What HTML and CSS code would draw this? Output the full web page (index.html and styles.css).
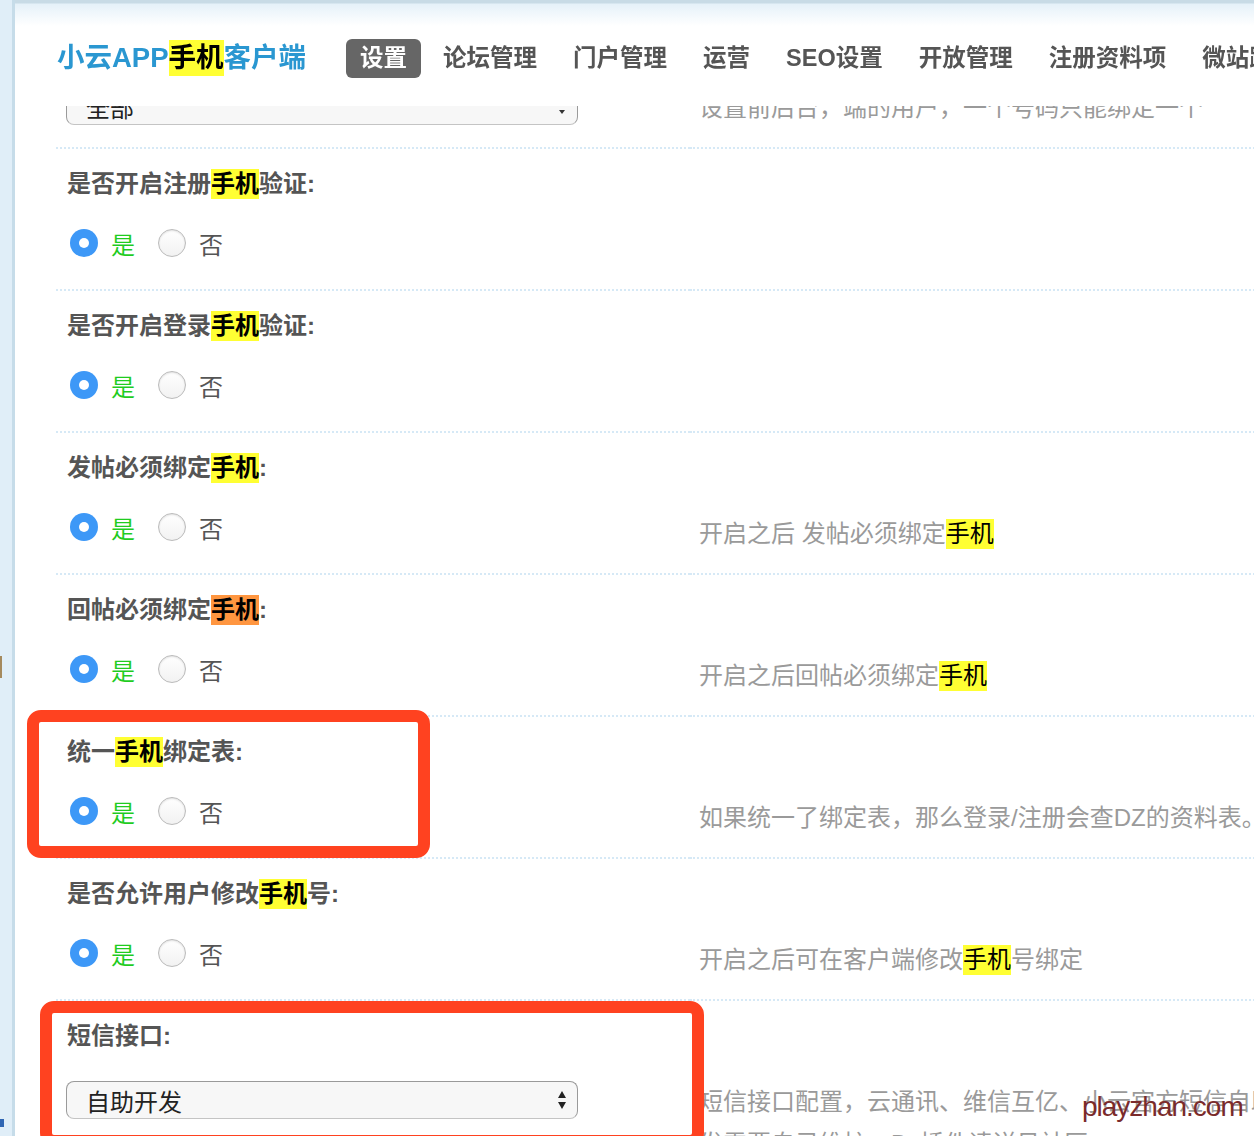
FILE: index.html
```html
<!DOCTYPE html>
<html lang="zh-CN">
<head>
    <meta charset="UTF-8">
    <title>小云APP手机客户端 - 设置</title>
    <link rel="stylesheet" href="styles.css">
</head>
<body>
<div class="side">
    <i class="side_mark1"></i>
    <i class="side_mark2"></i>
</div>

<div class="topbar">
    <h1 class="logo">小云APP<span class="hl">手机</span>客户端</h1>
    <ul class="nav">
        <li class="on">设置</li>
        <li>论坛管理</li>
        <li>门户管理</li>
        <li>运营</li>
        <li>SEO设置</li>
        <li>开放管理</li>
        <li>注册资料项</li>
        <li>微站跳转</li>
    </ul>
</div>

<div class="main">
    <!-- 上一项，被顶部导航遮住一半 -->
    <div class="row">
        <div class="cell_l">
            <div class="label">注册手机号码范围:</div>
            <div class="sel">
                <span>全部</span>
                <svg width="10" height="22" viewBox="0 0 10 22"><path d="M2 15 L8 15 L5 19 Z" fill="#333"/></svg>
            </div>
        </div>
        <div class="cell_r">设置前后台，端的用户，一个号码只能绑定一个</div>
    </div>

    <div class="row">
        <div class="cell_l">
            <div class="label">是否开启注册<span class="hl">手机</span>验证:</div>
            <div class="radios">
                <span class="rd on"></span><span class="yes">是</span>
                <span class="rd"></span><span class="no">否</span>
            </div>
        </div>
        <div class="cell_r"></div>
    </div>

    <div class="row">
        <div class="cell_l">
            <div class="label">是否开启登录<span class="hl">手机</span>验证:</div>
            <div class="radios">
                <span class="rd on"></span><span class="yes">是</span>
                <span class="rd"></span><span class="no">否</span>
            </div>
        </div>
        <div class="cell_r"></div>
    </div>

    <div class="row">
        <div class="cell_l">
            <div class="label">发帖必须绑定<span class="hl">手机</span>:</div>
            <div class="radios">
                <span class="rd on"></span><span class="yes">是</span>
                <span class="rd"></span><span class="no">否</span>
            </div>
        </div>
        <div class="cell_r">开启之后 发帖必须绑定<span class="hl">手机</span></div>
    </div>

    <div class="row">
        <div class="cell_l">
            <div class="label">回帖必须绑定<span class="hl cur">手机</span>:</div>
            <div class="radios">
                <span class="rd on"></span><span class="yes">是</span>
                <span class="rd"></span><span class="no">否</span>
            </div>
        </div>
        <div class="cell_r">开启之后回帖必须绑定<span class="hl">手机</span></div>
    </div>

    <div class="row">
        <div class="cell_l">
            <div class="label">统一<span class="hl">手机</span>绑定表:</div>
            <div class="radios">
                <span class="rd on"></span><span class="yes">是</span>
                <span class="rd"></span><span class="no">否</span>
            </div>
        </div>
        <div class="cell_r">如果统一了绑定表，那么登录/注册会查DZ的资料表。</div>
    </div>

    <div class="row">
        <div class="cell_l">
            <div class="label">是否允许用户修改<span class="hl">手机</span>号:</div>
            <div class="radios">
                <span class="rd on"></span><span class="yes">是</span>
                <span class="rd"></span><span class="no">否</span>
            </div>
        </div>
        <div class="cell_r">开启之后可在客户端修改<span class="hl">手机</span>号绑定</div>
    </div>

    <div class="row">
        <div class="cell_l">
            <div class="label">短信接口:</div>
            <div class="sel">
                <span>自助开发</span>
                <svg width="10" height="22" viewBox="0 0 10 22"><path d="M1 9 L9 9 L5 2 Z M1 13 L9 13 L5 20 Z" fill="#222"/></svg>
            </div>
        </div>
        <div class="cell_r">短信接口配置，云通讯、维信互亿、小云官方短信自助开发<br>发需要自己维护，Dz插件请详见社区</div>
    </div>
</div>

<!-- 截图上的红框标注 -->
<div class="mark_box box1"></div>
<div class="mark_box box2"></div>
<div class="watermark">playzhan.com</div>
</body>
</html>
```

FILE: styles.css
```css
body {
    margin: 0;
    width: 1254px;
    height: 1136px;
    overflow: hidden;
    background: #ffffff;
    font-family: "Liberation Sans", "Noto Sans CJK SC", sans-serif;
    display: flex;
}

.side {
    width: 12px;
    flex-shrink: 0;
    background: #e0eef8;
    border-right: 3px solid #c6dce9;
    position: relative;
}

.side_mark1 {
    position: absolute;
    left: 0;
    top: 656px;
    width: 2px;
    height: 22px;
    background: #a58a5e;
}

.side_mark2 {
    position: absolute;
    left: 0;
    top: 1119px;
    width: 4px;
    height: 8px;
    background: #2f66b3;
}

/* 顶部固定导航 */
.topbar {
    position: fixed;
    top: 0;
    left: 15px;
    right: 0;
    height: 106px;
    box-sizing: border-box;
    padding: 10px 0 0 42px;
    display: flex;
    align-items: center;
    white-space: nowrap;
    background: linear-gradient(#c8dbe6 0, #c8dbe6 3px, #e5f1f9 4px, #ffffff 26px);
    z-index: 5;
}

.logo {
    margin: 0;
    font-size: 27.5px;
    line-height: 36px;
    font-weight: bold;
    color: #2a97d1;
}

.logo .hl {
    line-height: 36px;
}

.nav {
    list-style: none;
    margin: 0 0 0 40px;
    padding: 0;
    display: flex;
}

.nav li {
    height: 39px;
    line-height: 39px;
    padding: 0 14px;
    margin-right: 8px;
    font-size: 23.5px;
    font-weight: bold;
    color: #555555;
    border-radius: 6px;
}

.nav li.on {
    background: #666666;
    color: #ffffff;
}

.hl {
    display: inline-block;
    line-height: 30px;
    background: #ffff33;
    color: #000000;
}

.hl.cur {
    background: #ff9640;
}

/* 设置项 */
.main {
    flex: 1;
    padding: 5px 0 0 41px;
}

.row {
    display: flex;
    height: 142px;
}

.cell_l {
    width: 634px;
    flex-shrink: 0;
    box-sizing: border-box;
    padding: 20px 0 0 11px;
    border-top: 2px dotted #d6e9f6;
}

.cell_r {
    flex: 1;
    padding: 80px 0 0 9px;
    border-top: 2px dotted #d6e9f6;
    font-size: 24px;
    line-height: 42px;
    color: #9a9a9a;
    white-space: nowrap;
}

.label {
    font-size: 24px;
    line-height: 30px;
    font-weight: bold;
    color: #555555;
}

.radios {
    margin-top: 24px;
    height: 40px;
    display: flex;
    align-items: center;
    font-size: 24px;
}

.rd {
    width: 28px;
    height: 28px;
    box-sizing: border-box;
    border-radius: 50%;
    border: 1px solid #bbbbbb;
    background: linear-gradient(#ffffff, #f2f2f2);
    box-shadow: inset 0 1px 2px rgba(0, 0, 0, 0.12);
    margin-left: 23px;
    position: relative;
}

.rd:first-child {
    margin-left: 3px;
}

.rd.on {
    border: none;
    background: #3d98f7;
    box-shadow: none;
}

.rd.on::after {
    content: "";
    position: absolute;
    left: 9px;
    top: 9px;
    width: 10px;
    height: 10px;
    border-radius: 50%;
    background: #ffffff;
}

.yes {
    margin-left: 13px;
    color: #1fcc1f;
}

.no {
    margin-left: 13px;
    color: #555555;
}

.sel {
    margin: 30px 0 0 -1px;
    width: 512px;
    height: 38px;
    box-sizing: border-box;
    padding: 0 10px 0 19px;
    border: 1px solid #9a9a9a;
    border-bottom-color: #c4c4c4;
    border-radius: 8px;
    background: #f7f7f7;
    display: flex;
    align-items: center;
    justify-content: space-between;
    font-size: 24px;
    color: #222222;
}

/* 标注 */
.mark_box {
    position: absolute;
    border: 12px solid #ff4220;
    border-radius: 14px;
    box-sizing: border-box;
}

.box1 {
    left: 27px;
    top: 710px;
    width: 403px;
    height: 148px;
}

.box2 {
    left: 40px;
    top: 1001px;
    width: 664px;
    height: 146px;
}

.watermark {
    position: absolute;
    left: 1082px;
    top: 1091px;
    font-family: "Liberation Sans", sans-serif;
    font-size: 28px;
    letter-spacing: -1px;
    color: #7a2b2b;
}
```
